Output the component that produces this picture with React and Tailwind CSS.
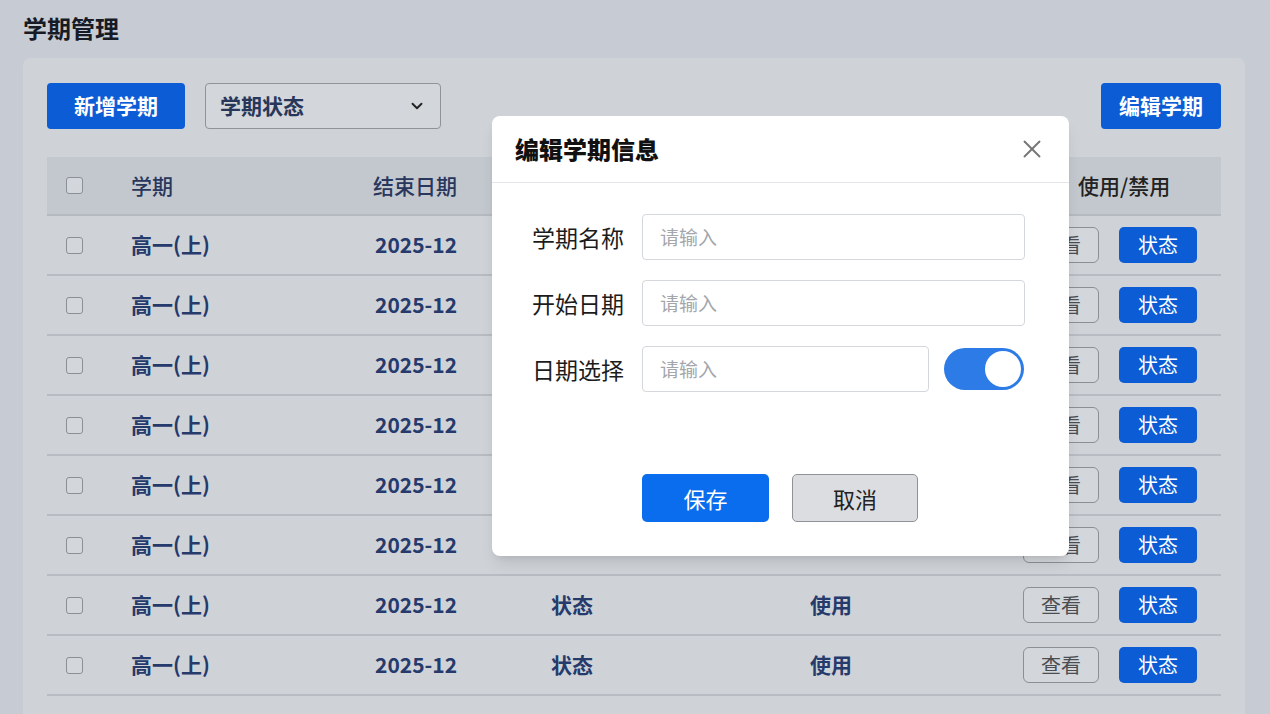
import { X, ChevronDown } from 'lucide-react'

// rows 0-5 have their middle cells hidden behind the dialog
const rows = Array.from({ length: 8 }, (_, i) => ({
  id: i,
  name: '高一(上)',
  end: '2025-12',
  status: i >= 6 ? '状态' : '',
  use: i >= 6 ? '使用' : '',
}))

function Checkbox() {
  return <span className="block w-[17px] h-[17px] rounded-[3px] border-[1.5px] border-[#8b9097] bg-[#d3d6da]" />
}

function Field({ label, children }) {
  return (
    <div className="flex items-center">
      <label className="w-[150px] pr-[18px] text-right text-[23px] text-[#1c1c1c]">{label}</label>
      {children}
    </div>
  )
}

function Input({ className = '' }) {
  return (
    <div className={`h-[46px] flex items-center px-[17px] rounded-[4px] border border-[#d4d7dc] bg-white text-[19px] text-[#a3a6ab] ${className}`}>
      请输入
    </div>
  )
}

export default function App() {
  return (
    <div className="relative h-screen overflow-hidden bg-[#c7ccd4] font-['Noto_Sans_CJK_SC','Noto_Sans',sans-serif]">
      <div className="pl-[23px] pr-[25px]">
        <h1 className="pt-[10px] h-[58px] text-[24px] font-bold text-[#161b26]">学期管理</h1>
        <div className="rounded-t-[8px] bg-[#cfd3d8] px-[24px] pt-[25px] min-h-[700px]">
          <div className="flex items-center gap-[20px]">
            <button className="w-[138px] h-[46px] rounded-[4px] bg-[#0b5cd5] text-white text-[21px] font-semibold">新增学期</button>
            <div className="w-[236px] h-[46px] rounded-[4px] border border-[#8f949b] bg-[#d3d6db] flex items-center justify-between px-[14px] text-[21px] font-semibold text-[#28365a]">
              学期状态
              <ChevronDown size={18} strokeWidth={2.5} className="text-[#222]" />
            </div>
            <div className="flex-1" />
            <button className="w-[120px] h-[46px] rounded-[4px] bg-[#0b5cd5] text-white text-[21px] font-semibold">编辑学期</button>
          </div>

          <div className="mt-[28px]">
            <div className="flex items-center h-[59px] bg-[#c3c8cf] border-b-2 border-[#b5b9c0] text-[21px] font-medium text-[#29375c]">
              <div className="w-[84px] pl-[19px]"><Checkbox /></div>
              <div className="w-[242px]">学期</div>
              <div className="flex-1">结束日期</div>
              <div className="w-[143px] text-[#222]">使用/禁用</div>
            </div>
            {rows.map((r) => (
              <div key={r.id} className="flex items-center h-[60px] border-b-2 border-[#b8bcc2] text-[21px] font-semibold text-[#263a6c]">
                <div className="w-[84px] pl-[19px]"><Checkbox /></div>
                <div className="w-[244px]">{r.name}</div>
                <div className="w-[176px]">{r.end}</div>
                <div className="w-[259px]">{r.status}</div>
                <div className="flex-1">{r.use}</div>
                <div className="flex gap-[20px] pr-[24px]">
                  <button className="w-[76px] h-[36px] rounded-[6px] border-[1.5px] border-[#8c9096] bg-[#d3d6da] text-[20px] font-normal text-[#4a4d52]">查看</button>
                  <button className="w-[78px] h-[36px] rounded-[5px] bg-[#0b5cd5] text-[20px] font-normal text-white">状态</button>
                </div>
              </div>
            ))}
          </div>
        </div>
      </div>

      <div className="absolute left-[492px] top-[116px] w-[577px] h-[440px] rounded-[8px] bg-white shadow-lg">
        <div className="flex items-center justify-between h-[67px] pl-[23px] pr-[22px] border-b border-[#e3e5e8]">
          <h2 className="text-[24px] font-black text-[#111]">编辑学期信息</h2>
          <X size={30} strokeWidth={1.5} className="text-[#777]" />
        </div>
        <div className="pt-[31px] flex flex-col gap-[20px]">
          <Field label="学期名称"><Input className="w-[383px]" /></Field>
          <Field label="开始日期"><Input className="w-[383px]" /></Field>
          <Field label="日期选择">
            <Input className="w-[287px]" />
            <div className="ml-[15px] w-[80px] h-[42px] rounded-full bg-[#2d7be6] flex items-center justify-end pr-[3px]">
              <span className="block w-[36px] h-[36px] rounded-full bg-white" />
            </div>
          </Field>
        </div>
        <div className="flex gap-[23px] pl-[150px] mt-[82px]">
          <button className="w-[127px] h-[48px] rounded-[5px] bg-[#0a6ded] text-white text-[22px]">保存</button>
          <button className="w-[126px] h-[48px] rounded-[5px] border border-[#8f9398] bg-[#dcdde0] text-[22px] text-[#222]">取消</button>
        </div>
      </div>
    </div>
  )
}
